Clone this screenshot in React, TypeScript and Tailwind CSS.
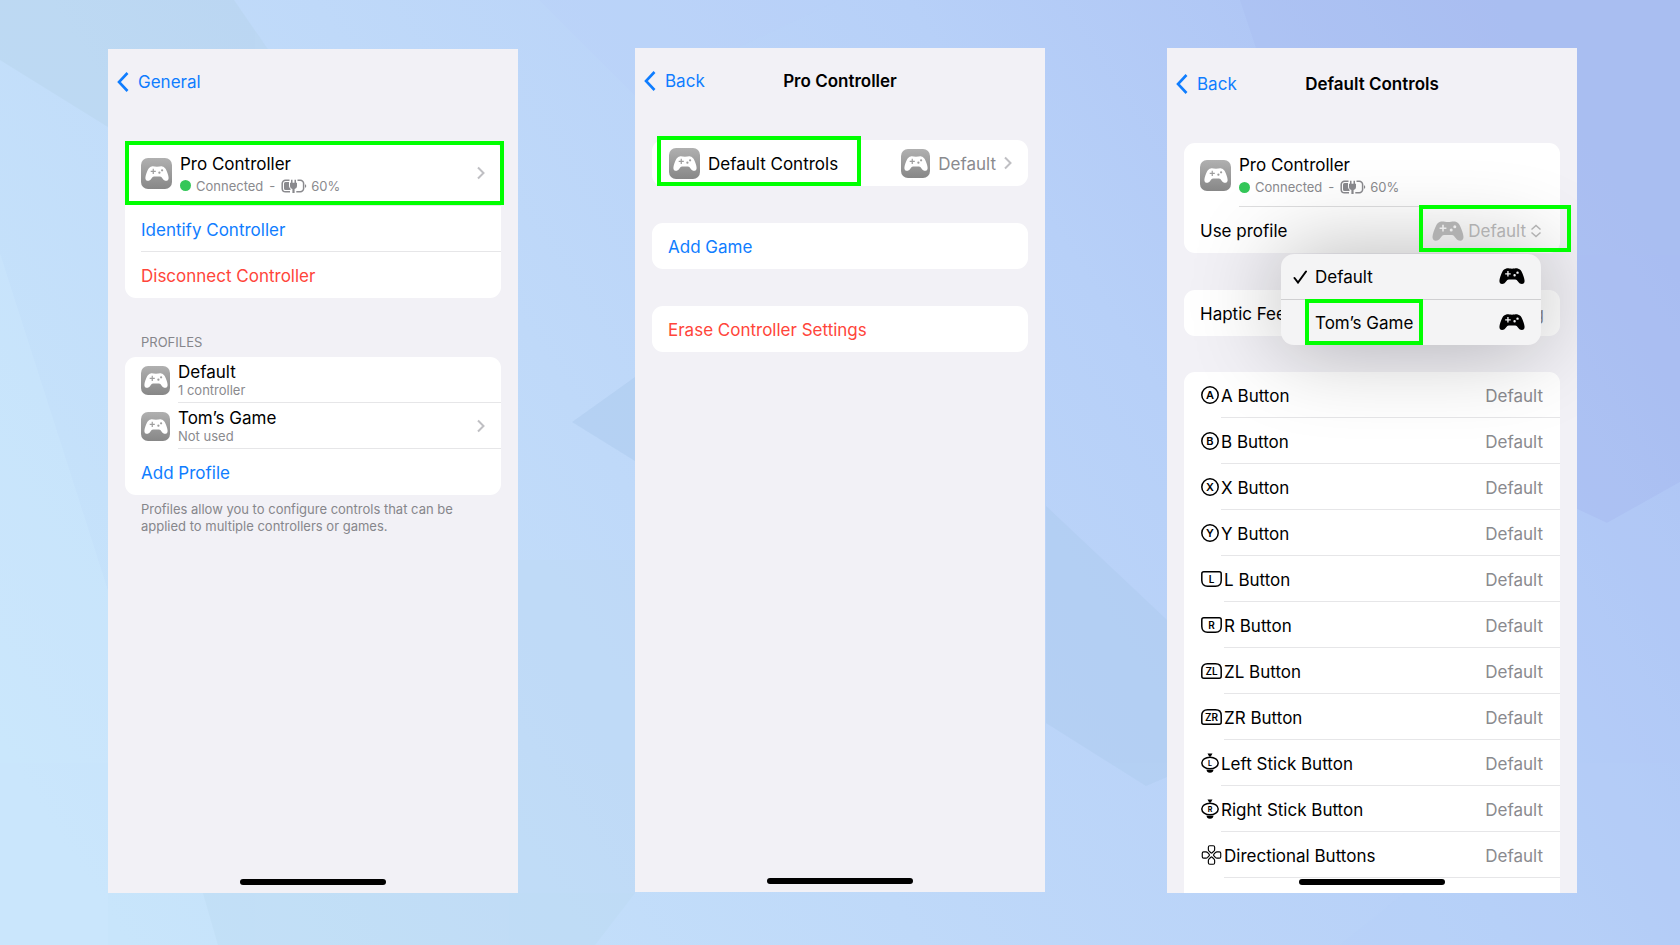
import { useState, type ReactNode } from "react";

type Glyph = "circle" | "bumper" | "trigger" | "stick" | "dpad";

const buttons: { label: string; glyph: Glyph; letter?: string }[] = [
  { label: "A Button", glyph: "circle", letter: "A" },
  { label: "B Button", glyph: "circle", letter: "B" },
  { label: "X Button", glyph: "circle", letter: "X" },
  { label: "Y Button", glyph: "circle", letter: "Y" },
  { label: "L Button", glyph: "bumper", letter: "L" },
  { label: "R Button", glyph: "bumper", letter: "R" },
  { label: "ZL Button", glyph: "trigger", letter: "ZL" },
  { label: "ZR Button", glyph: "trigger", letter: "ZR" },
  { label: "Left Stick Button", glyph: "stick", letter: "L" },
  { label: "Right Stick Button", glyph: "stick", letter: "R" },
  { label: "Directional Buttons", glyph: "dpad" },
];

const profiles = ["Default", "Tom’s Game"];

function Gamepad({ className }: { className: string }) {
  return (
    <svg viewBox="0 0 32 20" fill="currentColor" fillRule="evenodd" className={className} aria-hidden="true">
      <path d="M9 .6C11 .1 13 .9 16 .9S21 .1 23 .6c2 .5 3.7 1.6 4.6 3.4 2 4 3.9 9 3.9 12 0 2.3-1.3 3.8-3.3 3.8s-3.2-1-4.6-2.8l-1.8-2.2c-.5-.6-1-.8-1.8-.8h-8c-.8 0-1.3.2-1.8.8L8.4 17C7 18.8 5.8 19.8 3.8 19.8S.5 18.3.5 16c0-3 1.9-8 3.9-12C5.3 2.2 7 1.1 9 .6ZM10.2 3.8v2.6H7.6V8h2.6v2.6h1.6V8h2.6V6.4h-2.6V3.8ZM22.8 4.2a1.5 1.5 0 1 0 0 3 1.5 1.5 0 1 0 0-3ZM19.2 7.4a1.5 1.5 0 1 0 0 3 1.5 1.5 0 1 0 0-3Z" />
    </svg>
  );
}

function Tile({ small = false }: { small?: boolean }) {
  return (
    <span
      className={`flex shrink-0 items-center justify-center rounded-[7px] bg-linear-to-b from-[#b0b0b0] to-[#878787] text-white ${
        small ? "size-[29px]" : "size-[31px]"
      }`}
    >
      <Gamepad className="w-6" />
    </span>
  );
}

function Chevron() {
  return (
    <svg viewBox="0 0 8 14" fill="none" className="h-[14px] w-2 shrink-0 text-[#bfbfc3]" aria-hidden="true">
      <path d="m1 1.5 5.5 5.5L1 12.5" stroke="currentColor" strokeWidth="2" />
    </svg>
  );
}

function Battery() {
  return (
    <svg viewBox="0 0 26 14" className="h-[14px] w-[26px]" aria-hidden="true">
      <g fill="none" stroke="currentColor" strokeWidth="1.5">
        <path d="M8.5 1.2h-4A3.3 3.3 0 0 0 1.2 4.5v5a3.3 3.3 0 0 0 3.3 3.3H9" />
        <path d="M16.5 1.2h2.8a3.3 3.3 0 0 1 3.3 3.3v5a3.3 3.3 0 0 1-3.3 3.3h-4" />
      </g>
      <g fill="currentColor">
        <path d="M4.5 3H8v3.5c0 1.5.6 2.5 1.5 3.2V11h-5A1.5 1.5 0 0 1 3 9.500v-5A1.500 1.500 0 0 1 4.500 3Z" />
        <path d="M10 .7h1.5v3h2v-3H15v3h1v3c0 1.800-1 2.800-2.400 3.200V14h-2.200V9.900C10 9.500 9 8.500 9 6.700v-3h1Z" />
        <path d="M24 5.200c.8.2 1.200.9 1.200 1.800s-.4 1.600-1.200 1.800Z" />
      </g>
    </svg>
  );
}

function ButtonGlyph({ glyph, letter }: { glyph: Glyph; letter?: string }) {
  if (glyph === "dpad") {
    return (
      <svg viewBox="0 0 21 21" className="h-5 w-[21px] shrink-0" fill="none" stroke="currentColor" strokeWidth="1.2" aria-hidden="true">
        {[0, 90, 180, 270].map((angle) => (
          <path
            key={angle}
            transform={`rotate(${angle} 10.5 10.5)`}
            d="M8.7.8h3.6c.9 0 1.5.6 1.5 1.5v2.400c0 .8-.3 1.300-.8 1.800l-1.800 1.600c-.4.4-1 .4-1.400 0L8 6.500c-.5-.5-.8-1-.8-1.800V2.300c0-.9.6-1.500 1.500-1.500Z"
          />
        ))}
      </svg>
    );
  }
  if (glyph === "stick") {
    return (
      <svg viewBox="0 0 18 20" className="h-5 w-[18px] shrink-0" aria-hidden="true">
        <ellipse cx="9" cy="10" rx="8.2" ry="5.8" fill="none" stroke="currentColor" strokeWidth="1.5" />
        <path d="M6.5.5h5l-1.700 3H8.200ZM5.500 16.800h7c-.3 2-1.200 2.900-3.500 2.900s-3.200-.9-3.500-2.900Z" fill="currentColor" />
        <text x="9" y="12.5" textAnchor="middle" fontSize="7" fontWeight="700" fill="currentColor">
          {letter}
        </text>
      </svg>
    );
  }
  if (glyph === "circle") {
    return (
      <svg viewBox="0 0 18 18" className="size-[18px] shrink-0" aria-hidden="true">
        <circle cx="9" cy="9" r="8.2" fill="none" stroke="currentColor" strokeWidth="1.5" />
        <text x="9" y="13" textAnchor="middle" fontSize="11" fontWeight="600" fill="currentColor">
          {letter}
        </text>
      </svg>
    );
  }
  return (
    <svg viewBox="0 0 21 16" className="h-4 w-[21px] shrink-0" aria-hidden="true">
      {/* triggers are the bumper outline upside down */}
      <path
        d="M2.8.8h15.400c1.300 0 2 .8 2 2v6.700c0 3.500-2.200 5.700-5.700 5.700h-8C3 15.200.8 13 .8 9.500V2.800c0-1.200.7-2 2-2Z"
        transform={glyph === "trigger" ? "matrix(1 0 0 -1 0 16)" : undefined}
        fill="none"
        stroke="currentColor"
        strokeWidth="1.5"
      />
      <text x="10.5" y="12" textAnchor="middle" fontSize="10" fontWeight="600" fill="currentColor">
        {letter}
      </text>
    </svg>
  );
}

function Mark({ className }: { className: string }) {
  return <span className={`pointer-events-none absolute z-20 border-4 border-[#00ff00] ${className}`} aria-hidden="true" />;
}

function Screen({
  back,
  title,
  className = "",
  headerClass,
  children,
}: {
  back: string;
  title?: string;
  className?: string;
  headerClass: string;
  children: ReactNode;
}) {
  return (
    <section className={`relative flex min-w-0 flex-1 flex-col overflow-hidden bg-[#f2f1f6] ${className}`}>
      <header className={`grid grid-cols-[1fr_auto_1fr] items-center ${headerClass}`}>
        <a href="#" className="flex items-center gap-[9px] pl-[9px] text-[#0f7dff]">
          <svg viewBox="0 0 12 20" fill="none" className="h-5 w-3" aria-hidden="true">
            <path d="M10.5 1 2 10l8.5 9" stroke="currentColor" strokeWidth="2.6" />
          </svg>
          {back}
        </a>
        {title && <h1 className="font-semibold">{title}</h1>}
      </header>
      {children}
      <span className="absolute bottom-2 left-1/2 h-[6px] w-[146px] -translate-x-1/2 rounded-full bg-black" />
    </section>
  );
}

function Card({ className = "", children }: { className?: string; children: ReactNode }) {
  return <div className={`mx-[17px] rounded-[11px] bg-white ${className}`}>{children}</div>;
}

function Status() {
  return (
    <div className="flex flex-col gap-[2px] pt-[3px]">
      <span className="leading-5">Pro Controller</span>
      <span className="flex items-center text-[13px] leading-5 text-[#8a8a8e]">
        <span className="mr-[5px] size-[11px] rounded-full bg-[#34c759]" />
        Connected
        <span className="mx-[6px]">-</span>
        <Battery />
        <span className="ml-1">60%</span>
      </span>
    </div>
  );
}

function ActionRow({ label, color }: { label: string; color: string }) {
  return (
    <button type="button" className={`flex h-[46px] w-full items-center pt-[2px] pl-4 ${color}`}>
      {label}
    </button>
  );
}

function ProfileRow({ name, note, arrow = false }: { name: string; note: string; arrow?: boolean }) {
  return (
    <button type="button" className="flex h-[46px] w-full items-center gap-2 pl-4 text-left">
      <Tile small />
      <span className="flex flex-1 items-center justify-between self-stretch border-b border-[#e6e6e8] pr-4">
        <span className="flex flex-col">
          <span className="leading-5">{name}</span>
          <span className="text-[13px] leading-4 text-[#8a8a8e]">{note}</span>
        </span>
        {arrow && <Chevron />}
      </span>
    </button>
  );
}

function Backdrop() {
  return (
    <svg viewBox="0 0 1680 945" preserveAspectRatio="none" className="absolute inset-0 -z-10 size-full" aria-hidden="true">
      <defs>
        <linearGradient id="sky" gradientUnits="userSpaceOnUse" x1="100" y1="900" x2="1500" y2="0">
          <stop offset="0" stopColor="#c8e5fb" />
          <stop offset="0.4" stopColor="#bfd9f9" />
          <stop offset="0.7" stopColor="#b7d0f8" />
          <stop offset="1" stopColor="#abc0f3" />
        </linearGradient>
      </defs>
      <rect width="1680" height="945" fill="url(#sky)" />
      <g opacity="0.3">
        <path d="M0 0h234l33 48 40 60-199 19L0 60Z" fill="#b2d0e4" />
        <path d="M0 253 108 590v355H0Z" fill="#cfeaff" />
        <path d="M203 893h432l-40 52H218Z" fill="#b9d8ee" />
        <path d="M539 0h300L635 96Z" fill="#b8d2f8" />
        <path d="m572 422 63-45v84Z" fill="#a0bfe6" />
        <path d="M518 560h117v333H518Z" fill="#bcd8f2" />
        <path d="m1046 506 121 114v157l-21 9-100-63Z" fill="#a6c6e8" />
        <path d="M1240 0h440v482l-73 41-30-14V48h-321Z" fill="#a6b8f0" />
        <path d="m1577 509 30 14 73-41v463h-340l237-190Z" fill="#b6cffa" />
      </g>
    </svg>
  );
}

export default function App() {
  const [profile, setProfile] = useState("Default");

  return (
    <main className="relative isolate flex min-h-screen pt-12 pr-[103px] pb-[52px] pl-[108px] font-['Inter',sans-serif] text-[17px] leading-5 text-black">
      <Backdrop />

      <Screen back="General" className="mt-px" headerClass="mb-[26px] h-[66px]">
        <Card>
          <button type="button" className="relative flex h-[65px] w-full items-center gap-2 pl-4 text-left">
            <Tile />
            <span className="flex flex-1 items-center justify-between self-stretch border-b border-[#e6e6e8] pr-4">
              <Status />
              <Chevron />
            </span>
            <Mark className="top-0 -right-[3px] bottom-px left-0" />
          </button>
          <button type="button" className="flex h-[46px] w-full pl-4 text-left text-[#0f7dff]">
            <span className="flex flex-1 items-center self-stretch border-b border-[#e6e6e8] pt-[2px]">Identify Controller</span>
          </button>
          <ActionRow label="Disconnect Controller" color="text-[#ff453a]" />
        </Card>
        <h2 className="mt-[34px] mb-[5px] px-[33px] text-[13px] leading-5 text-[#86868b]">PROFILES</h2>
        <Card>
          <ProfileRow name="Default" note="1 controller" />
          <ProfileRow name="Tom’s Game" note="Not used" arrow />
          <ActionRow label="Add Profile" color="text-[#0f7dff]" />
        </Card>
        <p className="mt-[6px] px-[33px] text-[13px] leading-[17px] text-[#86868b]">
          Profiles allow you to configure controls that can be applied to multiple controllers or games.
        </p>
      </Screen>

      <Screen back="Back" title="Pro Controller" className="mr-[122px] mb-px ml-[117px]" headerClass="mb-[27px] h-[65px]">
        <Card>
          <button type="button" className="flex h-[46px] w-full items-center justify-between pr-4 pl-[17px]">
            <span className="relative flex items-center gap-2">
              <Tile />
              <span className="pt-[2px]">Default Controls</span>
              <Mark className="-top-[12px] -right-[23px] -bottom-[7px] -left-3" />
            </span>
            <span className="flex items-center gap-2 text-[#8a8a8e]">
              <Tile small />
              <span className="pt-[2px]">Default</span>
              <Chevron />
            </span>
          </button>
        </Card>
        <Card className="mt-[37px]">
          <ActionRow label="Add Game" color="text-[#0f7dff]" />
        </Card>
        <Card className="mt-[37px]">
          <ActionRow label="Erase Controller Settings" color="text-[#ff453a]" />
        </Card>
      </Screen>

      <Screen back="Back" title="Default Controls" headerClass="mb-6 h-[71px]">
        <Card>
          <div className="flex h-[64px] items-center gap-2 pl-4">
            <Tile />
            <div className="flex flex-1 items-center self-stretch border-b border-[#dededf]">
              <Status />
            </div>
          </div>
          <div className="relative flex h-[46px] items-center justify-between pt-[2px] pr-[18px] pl-4">
            <label htmlFor="profile">Use profile</label>
            <span className="relative z-20 flex items-center gap-1 text-[#b0b0b0]">
              <Gamepad className="w-8" />
              <select
                id="profile"
                value={profile}
                onChange={(e) => setProfile(e.target.value)}
                className="field-sizing-content appearance-none bg-transparent"
              >
                {profiles.map((p) => (
                  <option key={p}>{p}</option>
                ))}
              </select>
              <svg viewBox="0 0 12 14" fill="none" className="h-[14px] w-3" aria-hidden="true">
                <path d="m1.5 5.5 4.5-4 4.5 4M1.5 8.5l4.5 4 4.5-4" stroke="currentColor" strokeWidth="1.5" />
              </svg>
            </span>
            <Mark className="-top-[2px] -right-[11px] bottom-px w-[152px]" />

            {/* open profile menu, hangs below the select */}
            <ul
              role="menu"
              className="absolute top-[47px] right-[19px] z-10 w-[260px] rounded-[13px] bg-[#f4f4f5] shadow-[0_0_90px_rgba(0,0,0,0.3)]"
            >
              {profiles.map((p, i) => (
                <li key={p} role="none" className={i > 0 ? "border-t border-[#cfcfd1]" : ""}>
                  <button
                    type="button"
                    role="menuitemradio"
                    aria-checked={p === profile}
                    onClick={() => setProfile(p)}
                    className="flex h-[45px] w-full items-center pr-4 pl-3"
                  >
                    <span className="w-[22px]">
                      {p === profile && (
                        <svg viewBox="0 0 15 14" fill="none" className="h-[14px] w-[15px]" aria-hidden="true">
                          <path d="m1.5 8 3.5 4.5 8-11" stroke="currentColor" strokeWidth="2" strokeLinecap="round" />
                        </svg>
                      )}
                    </span>
                    <span className="relative">
                      {p}
                      {i === 1 && <Mark className="-top-[14px] -right-[10px] -bottom-3 -left-[10px]" />}
                    </span>
                    <Gamepad className="ml-auto w-[26px]" />
                  </button>
                </li>
              ))}
            </ul>
          </div>
        </Card>
        <Card className="mt-[37px] flex h-[46px] items-center justify-between pt-[2px] pr-4 pl-4">
          <span>Haptic Feedback</span>
          <span className="text-[#8a8a8e]">Strong</span>
        </Card>
        <Card className="mt-9 flex-1 rounded-b-none">
          {buttons.map((b) => (
            <button key={b.label} type="button" className="flex h-[46px] w-full items-center gap-[2px] pl-[17px]">
              <ButtonGlyph glyph={b.glyph} letter={b.letter} />
              <span className="flex flex-1 items-center justify-between self-stretch border-b border-[#e6e6e8] pt-[2px] pr-[17px]">
                {b.label}
                <span className="text-[#8a8a8e]">Default</span>
              </span>
            </button>
          ))}
        </Card>
      </Screen>
    </main>
  );
}
